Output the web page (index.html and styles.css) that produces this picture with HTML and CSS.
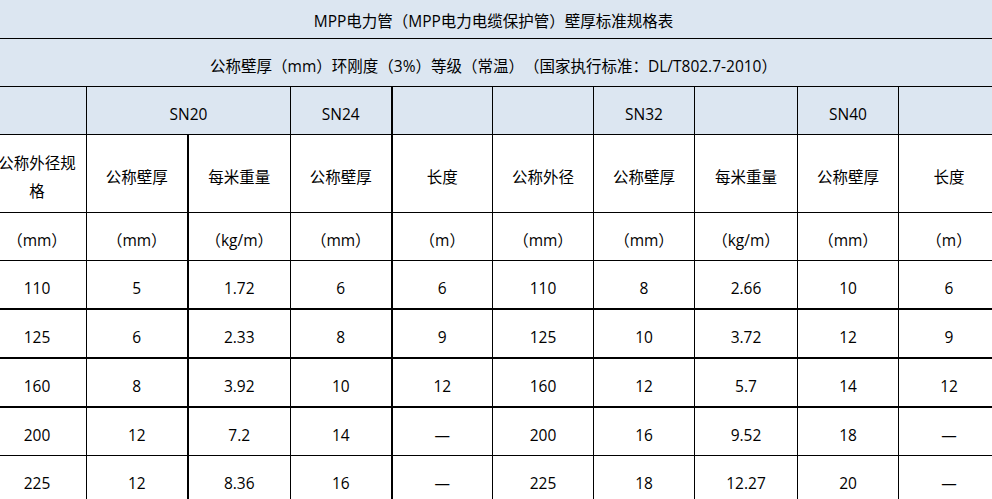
FILE: index.html
```html
<!DOCTYPE html>
<html lang="zh-CN">
<head>
<meta charset="utf-8">
<title>MPP电力管壁厚标准规格表</title>
<link rel="stylesheet" href="styles.css">
</head>
<body>
<table class="spec">
  <colgroup>
    <col class="c-first">
    <col class="c-n">
    <col class="c-w">
    <col class="c-n">
    <col class="c-n">
    <col class="c-n">
    <col class="c-n">
    <col class="c-w">
    <col class="c-n">
    <col class="c-n">
  </colgroup>
  <tr class="row-title">
    <td colspan="10" class="head">MPP电力管（MPP电力电缆保护管）壁厚标准规格表</td>
  </tr>
  <tr class="row-sub">
    <td colspan="10" class="head">公称壁厚（mm）环刚度（3%）等级（常温）（国家执行标准：DL/T802.7-2010）</td>
  </tr>
  <tr class="row-sn">
    <td class="head"></td>
    <td class="head" colspan="2">SN20</td>
    <td class="head tr">SN24</td>
    <td class="head"></td>
    <td class="head"></td>
    <td class="head">SN32</td>
    <td class="head"></td>
    <td class="head">SN40</td>
    <td class="head"></td>
  </tr>
  <tr class="row-label">
    <td class="wrap">公称外径规<br>格</td>
    <td>公称壁厚</td>
    <td class="tl">每米重量</td>
    <td>公称壁厚</td>
    <td class="tl">长度</td>
    <td>公称外径</td>
    <td>公称壁厚</td>
    <td>每米重量</td>
    <td>公称壁厚</td>
    <td>长度</td>
  </tr>
  <tr class="row-unit">
    <td>（mm）</td>
    <td>（mm）</td>
    <td class="tl">（kg/m）</td>
    <td>（mm）</td>
    <td class="tl">（m）</td>
    <td>（mm）</td>
    <td>（mm）</td>
    <td>（kg/m）</td>
    <td>（mm）</td>
    <td>（m）</td>
  </tr>
  <tr class="row-data">
    <td>110</td><td>5</td><td class="tl">1.72</td><td>6</td><td class="tl">6</td>
    <td>110</td><td>8</td><td>2.66</td><td>10</td><td>6</td>
  </tr>
  <tr class="row-data tb">
    <td>125</td><td>6</td><td class="tl">2.33</td><td>8</td><td class="tl">9</td>
    <td>125</td><td>10</td><td>3.72</td><td>12</td><td>9</td>
  </tr>
  <tr class="row-data tb">
    <td>160</td><td>8</td><td class="tl">3.92</td><td>10</td><td class="tl">12</td>
    <td>160</td><td>12</td><td>5.7</td><td>14</td><td>12</td>
  </tr>
  <tr class="row-data tb">
    <td>200</td><td>12</td><td class="tl">7.2</td><td>14</td><td class="tl">—</td>
    <td>200</td><td>16</td><td>9.52</td><td>18</td><td>—</td>
  </tr>
  <tr class="row-data">
    <td>225</td><td>12</td><td class="tl">8.36</td><td>16</td><td class="tl">—</td>
    <td>225</td><td>18</td><td>12.27</td><td>20</td><td>—</td>
  </tr>
</table>
</body>
</html>
```
FILE: styles.css
```css
html, body {
  margin: 0;
  padding: 0;
  background: #ffffff;
  overflow: hidden;
}

.spec {
  border-collapse: collapse;
  table-layout: fixed;
  width: 1012px;
  margin-left: -13px;
  font-family: "Open Sans", "Noto Sans CJK SC", sans-serif;
  font-size: 15.5px;
  color: #000000;
  text-spacing-trim: space-all;
}

.c-first { width: 99px; }
.c-n { width: 101px; }
.c-w { width: 103px; }

.spec td {
  border: 1px solid #000000;
  text-align: center;
  vertical-align: middle;
  white-space: nowrap;
  padding: 6px 0 0;
  line-height: 22px;
}

.spec td.head {
  background: #dce6f1;
}

.row-title td {
  border-top: none;
  height: 34px;
  padding-top: 4px;
}

.row-sub td { height: 41px; }
.row-sn td { height: 41px; }
.row-label td { height: 71px; }
.row-unit td { height: 41px; }
.row-data td { height: 41px; }

.spec td.wrap {
  white-space: normal;
  line-height: 28px;
}

.spec td.tl { border-left: 2px solid #000000; }
.spec td.tr { border-right: 2px solid #000000; }
.spec tr.tb td { border-top: 2px solid #000000; }
```
